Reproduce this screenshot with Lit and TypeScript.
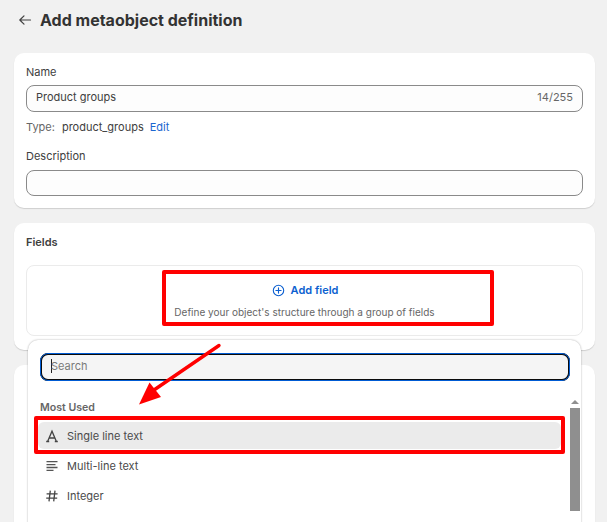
import { LitElement, html, css } from "lit";
import { customElement } from "lit/decorators.js";

@customElement("app-root")
export class AppRoot extends LitElement {
  static styles = css`
    :host { display: block; width: 607px; height: 522px; overflow: hidden; position: relative; background: #f1f1f1; font-family: Inter, "Noto Sans", sans-serif; font-size: 11px; color: #404040; }
    .page { display: flex; flex-direction: column; padding: 0 12px 0 14px; }
    .head { height: 53px; flex: none; display: flex; align-items: center; gap: 8px; padding: 0 0 13px 4px; box-sizing: border-box; }
    .head svg { width: 14px; height: 14px; flex: none; }
    h1 { margin: 0; font-size: 16px; line-height: 20px; font-weight: 700; color: #333; }
    .card { background: #fff; border-radius: 10px; box-shadow: 0 1px 1px rgba(0,0,0,.14); padding: 12px; box-sizing: border-box; margin-bottom: 15px; flex: none; }
    .c1 { height: 155px; }
    .c2 { height: 127px; }
    .c3 { height: 180px; margin-bottom: 0; }
    .label { line-height: 14px; height: 14px; color: #404040; }
    .input { height: 27px; margin-top: 6px; border: 1px solid #8a8a8a; border-radius: 8px; background: #fdfdfd; box-sizing: border-box; display: flex; justify-content: space-between; align-items: center; padding: 0 9px 3px 9px; }
    .count { color: #666; font-size: 11px; }
    .type { display: flex; gap: 7px; margin-top: 8px; line-height: 14px; }
    .type .k { color: #666; }
    .type a { color: #1a66d0; margin-left: -1px; }
    .desc { margin-top: 15px; }
    .input.d { height: 26px; margin-top: 7px; }
    .fields { font-weight: 600; color: #404040; line-height: 14px; }
    .box { margin-top: 16px; height: 71px; border: 1px solid #ebebeb; border-radius: 8px; box-sizing: border-box; display: flex; flex-direction: column; align-items: center; padding-top: 16px; }
    .add { display: flex; align-items: center; gap: 6px; color: #0b5fd0; font-weight: 600; line-height: 16px; margin-left: 1px; }
    .add svg { width: 13px; height: 13px; }
    .hint { color: #666; font-size: 10px; line-height: 14px; margin-top: 7px; }
    .pop { position: absolute; left: 28px; top: 340px; width: 553px; height: 190px; background: #fff; border-radius: 10px 10px 0 0; box-shadow: 0 0 2px rgba(0,0,0,.35); box-sizing: border-box; padding: 13px 11px 0 12px; }
    .search { height: 28px; width: 530px; border: 2px solid #0b0b0b; outline: 1px solid #005bd3; outline-offset: -1px; border-radius: 8px; background: #f5f5f5; box-sizing: border-box; display: flex; align-items: center; padding: 0 0 2px 9px; color: #7a7a7a; position: relative; }
    .caret { width: 1px; height: 14px; background: #222; margin-right: -1px; flex: none; }
    .group { margin-top: 21px; font-weight: 600; color: #666; line-height: 12px; font-size: 10.6px; }
    .list { margin-top: 8px; margin-left: -2px; width: 523px; }
    .row { height: 30px; display: flex; align-items: center; gap: 8px; padding-left: 7px; border-radius: 6px; color: #4a4a4a; box-sizing: border-box; }
    .row.sel { background: #ebebeb; height: 27px; margin-bottom: 2px; }
    .row svg { width: 14px; height: 14px; flex: none; }
    .sb { position: absolute; right: 1px; top: 60px; width: 10px; height: 111px; }
    .sb .up { width: 0; height: 0; border: 4px solid transparent; border-top: 0; border-bottom: 4px solid #8f8f8f; margin: 0 auto 4px; }
    .sb .th { height: 103px; background: #8f8f8f; }
    .mark { position: absolute; border: 4px solid #ff0000; border-radius: 2px; box-sizing: border-box; }
    .m1 { left: 162px; top: 270px; width: 332px; height: 56px; }
    .m2 { left: 34px; top: 416px; width: 531px; height: 38px; }
    .arrow { position: absolute; left: 130px; top: 340px; width: 100px; height: 70px; }
  `;

  render() {
    return html`
      <div class="page">
        <div class="head">
          <svg viewBox="0 0 14 14" fill="none" stroke="#404040" stroke-width="1.2" stroke-linecap="round" stroke-linejoin="round"><path d="M12.5 7H1.8M6 2.8 1.8 7 6 11.2"/></svg>
          <h1>Add metaobject definition</h1>
        </div>
        <section class="card c1">
          <div class="label">Name</div>
          <div class="input"><span>Product groups</span><span class="count">14/255</span></div>
          <div class="type"><span class="k">Type:</span><span>product_groups</span><a>Edit</a></div>
          <div class="label desc">Description</div>
          <div class="input d"></div>
        </section>
        <section class="card c2">
          <div class="fields">Fields</div>
          <div class="box">
            <div class="add">
              <svg viewBox="0 0 14 14" fill="none" stroke="#0b5fd0" stroke-width="1.2" stroke-linecap="round"><circle cx="7" cy="7" r="5.6"/><path d="M7 4.2v5.6M4.2 7h5.6"/></svg>
              <span>Add field</span>
            </div>
            <div class="hint">Define your object's structure through a group of fields</div>
          </div>
        </section>
        <section class="card c3"></section>
      </div>
      <div class="pop">
        <div class="search"><span class="caret"></span><span>Search</span></div>
        <div class="group">Most Used</div>
        <div class="list">
          <div class="row sel">
            <svg viewBox="0 0 14 14" fill="none" stroke="#444" stroke-width="1.3"><path d="M2.6 12.5 7 2.2l4.4 10.3M4.2 9h5.6M1.2 12.5h3M9.8 12.5h3"/></svg>
            <span>Single line text</span>
          </div>
          <div class="row">
            <svg viewBox="0 0 14 14" fill="none" stroke="#555" stroke-width="1.3"><path d="M1.5 2.7h11M1.5 5.6h9M1.5 8.5h11M1.5 11.4h7"/></svg>
            <span>Multi-line text</span>
          </div>
          <div class="row">
            <svg viewBox="0 0 14 14" fill="none" stroke="#444" stroke-width="1.3"><path d="M5.3 1.7 4 12.3M10 1.7 8.7 12.3M1.6 4.9h11M1.2 9.1h11"/></svg>
            <span>Integer</span>
          </div>
        </div>
        <div class="sb"><div class="up"></div><div class="th"></div></div>
      </div>
      <div class="mark m1"></div>
      <div class="mark m2"></div>
      <svg class="arrow" viewBox="0 0 100 70"><path d="M89 5.5 24 50" stroke="#f00" stroke-width="3.4" stroke-linecap="round" fill="none"/><path d="M9 64.5 19.5 42.5 31 57Z" fill="#f00"/></svg>
    `;
  }
}
